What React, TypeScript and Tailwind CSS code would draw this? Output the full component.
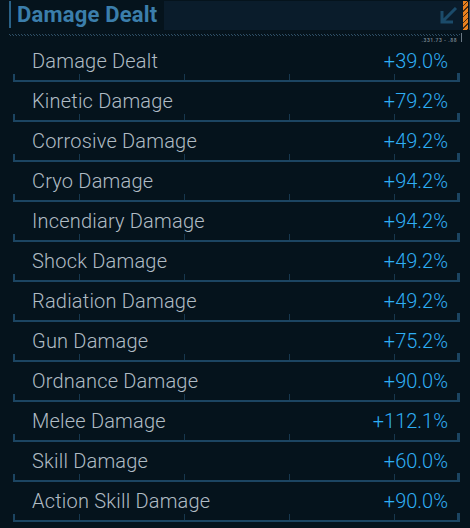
import React from "react";

const rows: [string, string][] = [
  ["Damage Dealt", "+39.0%"],
  ["Kinetic Damage", "+79.2%"],
  ["Corrosive Damage", "+49.2%"],
  ["Cryo Damage", "+94.2%"],
  ["Incendiary Damage", "+94.2%"],
  ["Shock Damage", "+49.2%"],
  ["Radiation Damage", "+49.2%"],
  ["Gun Damage", "+75.2%"],
  ["Ordnance Damage", "+90.0%"],
  ["Melee Damage", "+112.1%"],
  ["Skill Damage", "+60.0%"],
  ["Action Skill Damage", "+90.0%"],
];

function Row({ label, value }: { label: string; value: string }) {
  return (
    <div className="relative h-[40px] flex items-center justify-between pl-[19px] pr-[12px] pt-px pb-px border-b-2 border-[#1c4562]">
      <span className="text-[20px] leading-none font-light text-[#b0bcc4] tracking-[0.2px]">{label}</span>
      <span className="text-[20px] leading-none font-light text-[#2eaef4]">{value}</span>
      <div className="absolute left-0 bottom-[-2px] w-[2px] h-[8px] bg-[#1c4562]" />
      <div className="absolute left-[66px] bottom-0 w-px h-[6px] bg-[#17384f]" />
      <div className="absolute left-[171px] bottom-0 w-px h-[6px] bg-[#17384f]" />
      <div className="absolute left-[276px] bottom-0 w-px h-[6px] bg-[#17384f]" />
      <div className="absolute left-[381px] bottom-0 w-px h-[6px] bg-[#17384f]" />
      <div className="absolute right-0 bottom-[-2px] w-[3px] h-[9px] bg-[#1c4562]" />
    </div>
  );
}

export default function App() {
  return (
    <div
      className="w-[470px] h-[528px] bg-[#05131c] overflow-hidden"
      style={{ fontFamily: "Roboto, 'Liberation Sans', sans-serif" }}
    >
      <div className="flex h-[30px] pt-px pl-[9px]">
        <div className="w-[2px] h-[27px] bg-[#2a6186]" />
        <div className="pl-[6px] pr-[7px] text-[22px] font-bold leading-[28px] text-[#3b7eab] tracking-[0.2px]">
          Damage Dealt
        </div>
        <div className="flex-1 bg-[#0a1c2b] flex items-center justify-end pr-[5px]">
          <svg width="18" height="17" viewBox="0 0 18 17">
            <path d="M16 1 L3 14 M2 4 V15 H13" stroke="#1b4b6a" strokeWidth="3" fill="none" />
          </svg>
        </div>
        <div className="w-[5px] bg-[repeating-linear-gradient(135deg,#e8801f_0px,#e8801f_3px,#4a2c10_3px,#4a2c10_4px)]" />
        <div className="w-px ml-px bg-[#3a4a55]" />
      </div>
      <div className="flex items-start pl-[9px] pt-[3px] h-[12px]">
        <div className="flex-1 flex flex-col items-end">
          <svg width="451" height="4" className="block">
            <defs>
              <pattern id="sl" width="3" height="4" patternUnits="userSpaceOnUse">
                <path d="M0 1 L2 3" stroke="#2e4f66" strokeWidth="1" />
              </pattern>
            </defs>
            <rect width="451" height="4" fill="url(#sl)" />
          </svg>
          <div className="text-[5px] leading-[6px] text-[#6d7c86] pr-[3px] font-bold tracking-[0.5px]">.331.73 - .88</div>
        </div>
        <div className="w-px h-[9px] bg-[#6a7884] ml-px mr-[8px]" />
      </div>
      <div className="pl-[13px] pr-[10px]">
        {rows.map(([l, v]) => (
          <Row key={l} label={l} value={v} />
        ))}
      </div>
    </div>
  );
}
